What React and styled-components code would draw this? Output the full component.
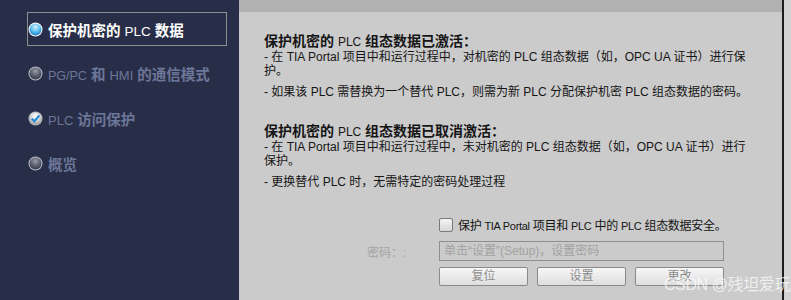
import styled, { createGlobalStyle } from "styled-components";

const GlobalStyle = createGlobalStyle`
  html, body {
    margin: 0;
    padding: 0;
    background: #d2d2d2;
  }
  * {
    box-sizing: border-box;
  }
`;

const Page = styled.div`
  display: flex;
  width: 791px;
  height: 300px;
  position: relative;
  overflow: hidden;
  font-family: "Liberation Sans", "Noto Sans CJK SC", sans-serif;
`;

const Sidebar = styled.div`
  width: 239px;
  flex-shrink: 0;
  background: #292e48;
  padding: 12px 0 0 27px;
  display: flex;
  flex-direction: column;
  gap: 10.7px;
`;

const NavItem = styled.div`
  width: 200px;
  height: 34px;
  display: flex;
  align-items: center;
  gap: 5px;
  border: 1px solid ${({ active }) => (active ? "#8e8e8e" : "transparent")};
  color: ${({ active }) => (active ? "#ffffff" : "#6c7698")};
  font-size: 14.5px;
  font-weight: bold;
  white-space: nowrap;
`;

const Latin = styled.span`
  font-family: "Liberation Sans", sans-serif;
  font-weight: normal;
  font-size: ${({ size }) => size || "13px"};
`;

const Main = styled.div`
  width: 545px;
  display: flex;
  flex-direction: column;
  border-right: 2px solid #1c1c1c;
`;

const TopBar = styled.div`
  height: 12px;
  background: #b1b1b1;
`;

const Content = styled.div`
  flex: 1;
  background: #cbcbcb;
  padding: 21px 0 0 25px;
  color: #151515;
`;

const Section = styled.div`
  margin-bottom: ${({ gap }) => gap || "0"};
`;

const Heading = styled.div`
  font-size: 14px;
  font-weight: bold;
  line-height: 16px;
`;

const Para = styled.div`
  font-size: 12px;
  line-height: 14px;
  white-space: nowrap;
  margin-top: ${({ top }) => top || "0"};
`;

const Form = styled.div`
  margin-left: 103px;
  display: grid;
  grid-template-columns: 72px 285px;
  row-gap: 8px;
  align-items: center;
`;

const CheckRow = styled.label`
  grid-column: 2;
  display: flex;
  align-items: center;
  gap: 5px;
  margin-top: 2px;
  font-size: 12px;
  letter-spacing: -0.3px;
  white-space: nowrap;
`;

const Box = styled.span`
  flex-shrink: 0;
  width: 14px;
  height: 14px;
  border: 1px solid #7a7a7a;
  border-radius: 2px;
  background: linear-gradient(#f4f4f4, #d6d6d6);
`;

const Label = styled.div`
  font-size: 12px;
  color: #a4a4a4;
`;

const Input = styled.div`
  height: 20px;
  border: 1px solid #8e8e8e;
  padding: 0 4px;
  font-size: 12px;
  line-height: 18px;
  color: #a2a2a2;
  white-space: nowrap;
`;

const Buttons = styled.div`
  grid-column: 2;
  display: flex;
  gap: 9px;
  margin-top: -2px;
`;

const Button = styled.button`
  width: 89px;
  height: 19px;
  padding: 0;
  border: 1px solid #8a8a8a;
  border-radius: 2px;
  background: linear-gradient(#f7f7f7, #dedede);
  color: #8c8c8c;
  font-family: "Liberation Sans", "Noto Sans CJK SC", sans-serif;
  font-size: 12px;
  line-height: 17px;
`;

const Edge = styled.div`
  flex: 1;
  background: #d2d2d2;
`;

const Watermark = styled.div`
  position: absolute;
  right: 1px;
  bottom: 5px;
  font-size: 16px;
  color: rgba(255, 255, 255, 0.7);
  font-family: "Liberation Sans", "Noto Sans CJK SC", sans-serif;
  letter-spacing: -0.4px;
`;

function Radio({ kind }) {
  const id = `g-${kind}`;
  const stops =
    kind === "active"
      ? ["#d8f3ff", "#5cc0f0", "#1d7fc4"]
      : kind === "check"
      ? ["#ffffff", "#d6d6d6", "#9a9a9a"]
      : ["#9a9ea8", "#5c6070", "#33374a"];
  return (
    <svg width="15" height="15" viewBox="0 0 15 15">
      <defs>
        <radialGradient id={id} cx="0.5" cy="0.3" r="0.7">
          <stop offset="0" stopColor={stops[0]} />
          <stop offset="0.55" stopColor={stops[1]} />
          <stop offset="1" stopColor={stops[2]} />
        </radialGradient>
      </defs>
      <circle cx="7.5" cy="7.5" r="7" fill={kind === "active" ? "#ffffff" : "#b8bbc4"} />
      <circle cx="7.5" cy="7.5" r="6" fill={`url(#${id})`} />
      {kind === "check" && (
        <path d="M3.8 7.6 L6.4 10.2 L11.4 4.4" fill="none" stroke="#1f86d6" strokeWidth="2" />
      )}
    </svg>
  );
}

export default function App() {
  return (
    <>
      <GlobalStyle />
      <Page>
        <Sidebar>
          <NavItem active>
            <Radio kind="active" />
            <span>
              保护机密的 <Latin size="13.5px">PLC</Latin> 数据
            </span>
          </NavItem>
          <NavItem>
            <Radio kind="off" />
            <span>
              <Latin size="12.5px">PG/PC</Latin> 和 <Latin>HMI</Latin> 的通信模式
            </span>
          </NavItem>
          <NavItem>
            <Radio kind="check" />
            <span>
              <Latin>PLC</Latin> 访问保护
            </span>
          </NavItem>
          <NavItem>
            <Radio kind="off" />
            概览
          </NavItem>
        </Sidebar>
        <Main>
          <TopBar />
          <Content>
            <Section gap="24px">
              <Heading>
                保护机密的 <Latin size="12px">PLC</Latin> 组态数据已激活：
              </Heading>
              <Para>
                - 在 TIA Portal 项目中和运行过程中，对机密的 PLC 组态数据（如，OPC UA 证书）进行保
              </Para>
              <Para>护。</Para>
              <Para top="7px">- 如果该 PLC 需替换为一个替代 PLC，则需为新 PLC 分配保护机密 PLC 组态数据的密码。</Para>
            </Section>
            <Section gap="25px">
              <Heading>
                保护机密的 <Latin size="12px">PLC</Latin> 组态数据已取消激活：
              </Heading>
              <Para>
                - 在 TIA Portal 项目中和运行过程中，未对机密的 PLC 组态数据（如，OPC UA 证书）进行
              </Para>
              <Para>保护。</Para>
              <Para top="7px">- 更换替代 PLC 时，无需特定的密码处理过程</Para>
            </Section>
            <Form>
              <CheckRow>
                <Box />
                <span>
                  保护 <Latin size="11px">TIA Portal</Latin> 项目和 <Latin size="11px">PLC</Latin> 中的{" "}
                  <Latin size="11px">PLC</Latin> 组态数据安全。
                </span>
              </CheckRow>
              <Label>密码：:</Label>
              <Input>单击“设置”(Setup)，设置密码</Input>
              <Buttons>
                <Button>复位</Button>
                <Button>设置</Button>
                <Button>更改</Button>
              </Buttons>
            </Form>
          </Content>
        </Main>
        <Edge />
        <Watermark>CSDN @残坦爱玩</Watermark>
      </Page>
    </>
  );
}
